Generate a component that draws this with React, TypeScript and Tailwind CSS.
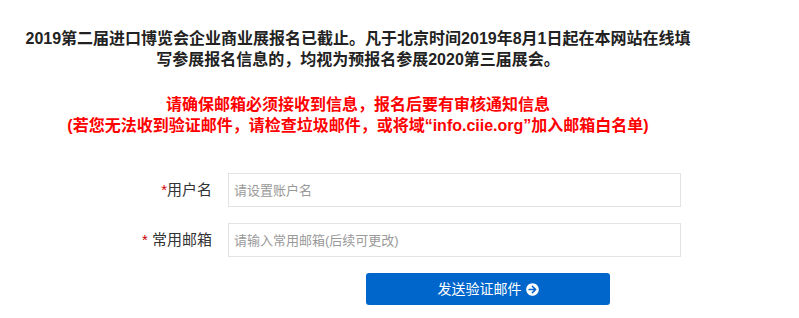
import React from "react";
import { FaArrowCircleRight } from "react-icons/fa";

export default function App() {
  const font = { fontFamily: '"Liberation Sans", Arial, "Noto Sans CJK SC", sans-serif' };
  return (
    <div className="w-[799px] h-[318px] bg-white overflow-hidden pt-[28px]" style={font}>
      <div className="w-[680px] ml-[18px] text-center font-bold text-[16px] leading-[21px] text-[#222]">
        <span className="whitespace-nowrap">2019第二届进口博览会企业商业展报名已截止。凡于北京时间2019年8月1日起在本网站在线填</span>
        <br />
        <span className="whitespace-nowrap">写参展报名信息的，均视为预报名参展2020第三届展会。</span>
      </div>
      <div className="w-[680px] ml-[18px] mt-[24px] text-center font-bold text-[16px] leading-[21px] text-[#ff0000]">
        <div className="whitespace-nowrap">请确保邮箱必须接收到信息，报名后要有审核通知信息</div>
        <div className="whitespace-nowrap">(若您无法收到验证邮件，请检查垃圾邮件，或将域“info.ciie.org”加入邮箱白名单)</div>
      </div>
      <div className="mt-[37px] flex flex-col gap-[16px]">
        <div className="flex items-center">
          <label className="w-[212px] text-right text-[15px] text-[#333]">
            <span className="text-[#cc0000]">*</span>用户名
          </label>
          <input
            className="ml-[16px] w-[453px] h-[34px] border border-[#e3e3e3] px-[5px] text-[13px] text-[#333] placeholder:text-[#999] outline-none"
            placeholder="请设置账户名"
            style={font}
          />
        </div>
        <div className="flex items-center">
          <label className="w-[212px] text-right text-[15px] text-[#333]">
            <span className="text-[#cc0000]">*</span> 常用邮箱
          </label>
          <input
            className="ml-[16px] w-[453px] h-[34px] border border-[#e3e3e3] px-[5px] text-[13px] text-[#333] placeholder:text-[#999] outline-none"
            placeholder="请输入常用邮箱(后续可更改)"
            style={font}
          />
        </div>
        <div className="flex">
          <button
            className="ml-[366px] w-[244px] h-[32px] rounded-[3px] bg-[#0066cb] text-white text-[14px] flex items-center justify-center gap-[4px]"
            style={font}
          >
            <span>发送验证邮件</span>
            <FaArrowCircleRight className="w-[13px] h-[13px]" />
          </button>
        </div>
      </div>
    </div>
  );
}
